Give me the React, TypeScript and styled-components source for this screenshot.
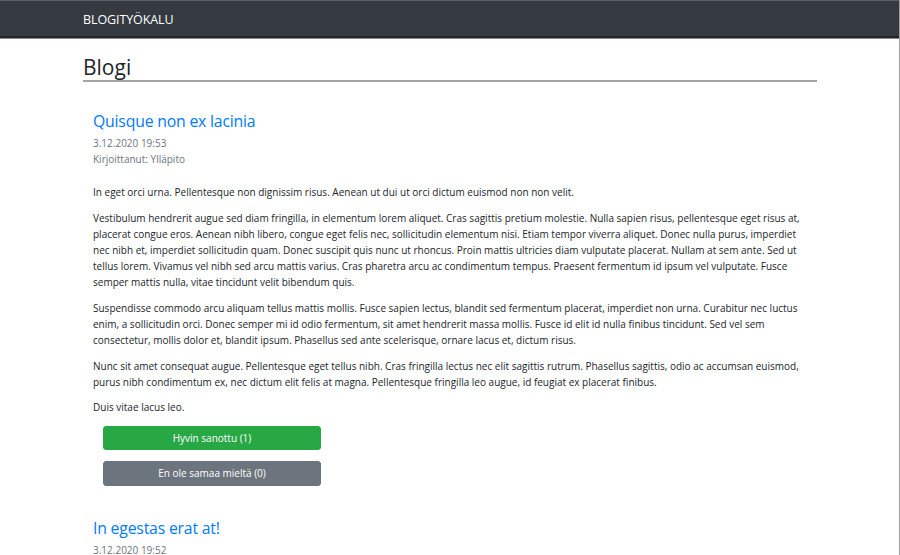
import React from "react";
import styled, { createGlobalStyle } from "styled-components";

const GlobalStyle = createGlobalStyle`
  html, body { margin: 0; padding: 0; overflow: hidden; background: #fff; }
  body {
    font-family: "Open Sans", "Noto Sans", "DejaVu Sans", sans-serif;
    color: #212529;
    font-size: 10px;
    line-height: 16.1px;
  }
  * { box-sizing: border-box; }
`;

const Frame = styled.div`
  min-height: 555px;
  border-right: 1px solid #a0a0a0;
`;

const NavBar = styled.nav`
  height: 38px;
  background: #343a40;
  border-top: 1px solid #5b5e62;
  border-bottom: 2px solid #202427;
  box-shadow: 0 1px 0 #8c8c8c;
  display: flex;
  align-items: center;
  padding-left: 83px;
  padding-top: 3px;
`;

const Brand = styled.a`
  color: #fff;
  font-size: 12.5px;
  font-weight: 500;
  text-decoration: none;
  letter-spacing: -0.1px;
`;

const Container = styled.main`
  width: 734px;
  margin-left: 83px;
`;

const PageTitle = styled.h1`
  margin: 17px 0 0;
  font-size: 21px;
  font-weight: 500;
  line-height: 25px;
  border-bottom: 2px solid #a3a3a3;
`;

const Post = styled.article<{ $first?: boolean }>`
  padding: 0 10px;
  margin-top: ${(p) => (p.$first ? "29px" : "32px")};
`;

const PostTitle = styled.h2`
  margin: 0 0 4px;
  font-size: 15.8px;
  letter-spacing: -0.2px;
  font-weight: 500;
  line-height: 20px;
  color: #007bff;
`;

const Meta = styled.div`
  color: #6c757d;
  font-size: 10px;
  line-height: 16px;
`;

const Body = styled.div`
  margin-top: 17px;
`;

const Para = styled.p`
  margin: 0 0 9.6px;
`;

const Line = styled.span`
  display: block;
  white-space: nowrap;
`;

const Buttons = styled.div`
  display: flex;
  flex-direction: column;
  gap: 11px;
  padding-left: 10px;
  margin-top: 10px;
`;

const VoteButton = styled.button<{ $variant: "success" | "secondary" }>`
  width: 218px;
  height: 24.5px;
  border-radius: 3px;
  border: 1px solid ${(p) => (p.$variant === "success" ? "#28a745" : "#6c757d")};
  background: ${(p) => (p.$variant === "success" ? "#28a745" : "#6c757d")};
  color: #fff;
  font-family: inherit;
  font-size: 10px;
  padding: 0;
  cursor: pointer;
`;

const paragraphs: string[][] = [
  ["In eget orci urna. Pellentesque non dignissim risus. Aenean ut dui ut orci dictum euismod non non velit."],
  [
    "Vestibulum hendrerit augue sed diam fringilla, in elementum lorem aliquet. Cras sagittis pretium molestie. Nulla sapien risus, pellentesque eget risus at,",
    "placerat congue eros. Aenean nibh libero, congue eget felis nec, sollicitudin elementum nisi. Etiam tempor viverra aliquet. Donec nulla purus, imperdiet",
    "nec nibh et, imperdiet sollicitudin quam. Donec suscipit quis nunc ut rhoncus. Proin mattis ultricies diam vulputate placerat. Nullam at sem ante. Sed ut",
    "tellus lorem. Vivamus vel nibh sed arcu mattis varius. Cras pharetra arcu ac condimentum tempus. Praesent fermentum id ipsum vel vulputate. Fusce",
    "semper mattis nulla, vitae tincidunt velit bibendum quis.",
  ],
  [
    "Suspendisse commodo arcu aliquam tellus mattis mollis. Fusce sapien lectus, blandit sed fermentum placerat, imperdiet non urna. Curabitur nec luctus",
    "enim, a sollicitudin orci. Donec semper mi id odio fermentum, sit amet hendrerit massa mollis. Fusce id elit id nulla finibus tincidunt. Sed vel sem",
    "consectetur, mollis dolor et, blandit ipsum. Phasellus sed ante scelerisque, ornare lacus et, dictum risus.",
  ],
  [
    "Nunc sit amet consequat augue. Pellentesque eget tellus nibh. Cras fringilla lectus nec elit sagittis rutrum. Phasellus sagittis, odio ac accumsan euismod,",
    "purus nibh condimentum ex, nec dictum elit felis at magna. Pellentesque fringilla leo augue, id feugiat ex placerat finibus.",
  ],
  ["Duis vitae lacus leo."],
];

export default function App() {
  return (
    <Frame>
      <GlobalStyle />
      <NavBar>
        <Brand href="#">BLOGITYÖKALU</Brand>
      </NavBar>
      <Container>
        <PageTitle>Blogi</PageTitle>
        <Post $first>
          <PostTitle>Quisque non ex lacinia</PostTitle>
          <Meta>3.12.2020 19:53</Meta>
          <Meta>Kirjoittanut: Ylläpito</Meta>
          <Body>
            {paragraphs.map((lines, i) => (
              <Para key={i}>
                {lines.map((l, j) => (
                  <Line key={j}>{l}</Line>
                ))}
              </Para>
            ))}
          </Body>
          <Buttons>
            <VoteButton $variant="success">Hyvin sanottu (1)</VoteButton>
            <VoteButton $variant="secondary">En ole samaa mieltä (0)</VoteButton>
          </Buttons>
        </Post>
        <Post>
          <PostTitle>In egestas erat at!</PostTitle>
          <Meta>3.12.2020 19:52</Meta>
          <Meta>Kirjoittanut: Ylläpito</Meta>
        </Post>
      </Container>
    </Frame>
  );
}
